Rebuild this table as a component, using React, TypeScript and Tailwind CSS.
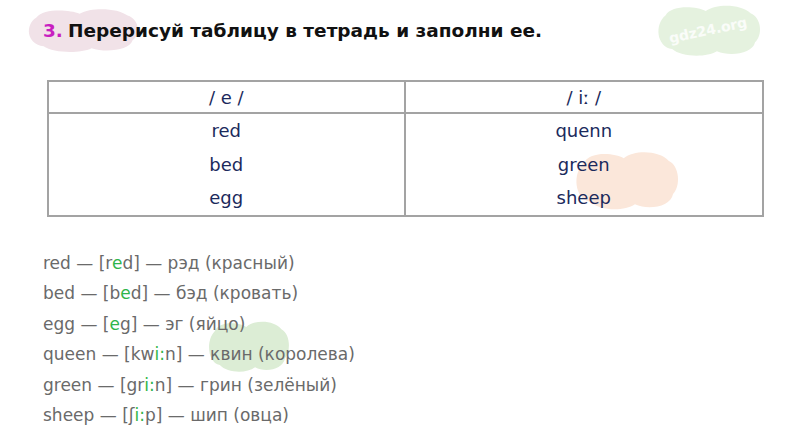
import React from "react";

const G = ({ children }: { children: React.ReactNode }) => (
  <span className="text-[#2fb54a]">{children}</span>
);

function Blob({
  cls,
  color,
  label,
}: {
  cls: string;
  color: string;
  label?: boolean;
}) {
  return (
    <div className={`pointer-events-none absolute ${cls}`}>
      <svg viewBox="0 0 100 50" preserveAspectRatio="none" className="h-full w-full">
        <path
          d="M12 12 C18 2 40 4 48 8 C58 1 80 2 88 10 C98 14 99 30 92 36 C90 46 70 49 58 44 C48 50 26 49 18 42 C4 40 2 20 12 12 Z"
          fill={color}
        />
      </svg>
      {label && (
        <div
          className="absolute inset-0 flex -rotate-12 items-center justify-center text-[14px] font-bold text-white/80"
          style={{ fontFamily: '"DejaVu Sans", sans-serif' }}
        >
          gdz24.org
        </div>
      )}
    </div>
  );
}

export default function App() {
  const rows = [
    ["red", "quenn"],
    ["bed", "green"],
    ["egg", "sheep"],
  ];
  return (
    <div
      className="relative h-[443px] w-[800px] overflow-hidden bg-white"
      style={{ fontFamily: '"DejaVu Sans", "Noto Sans", sans-serif' }}
    >
      <Blob cls="left-[22px] top-[6px] h-[48px] w-[120px]" color="#f1e2e8" />
      <Blob cls="left-[652px] top-[2px] h-[56px] w-[112px]" color="#e5f2df" label />
      <Blob cls="left-[570px] top-[148px] h-[64px] w-[112px]" color="#fbe7da" />
      <Blob cls="left-[204px] top-[318px] h-[56px] w-[88px]" color="#dcedd5" />

      <div className="relative flex flex-col px-[43px] pt-[18px]">
        <div className="flex items-baseline text-[18.5px] font-bold leading-[26px] text-[#111]">
          <span className="mr-[5px] text-[#c81fc0]">3.</span>
          <span>Перерисуй таблицу в тетрадь и заполни ее.</span>
        </div>

        <div className="ml-[4px] mt-[36px] w-[717px] border-2 border-[#a3a3a3] text-[18px] text-[#1b2a5c]">
          <div className="grid h-[32px] grid-cols-2 border-b-2 border-[#a3a3a3]">
            <div className="flex items-center justify-center border-r-2 border-[#a3a3a3]">/ e /</div>
            <div className="flex items-center justify-center">/ iː /</div>
          </div>
          <div className="grid grid-cols-2">
            <div className="flex flex-col items-center border-r-2 border-[#a3a3a3]">
              {rows.map((r) => (
                <div key={r[0]} className="flex h-[33.5px] items-center">{r[0]}</div>
              ))}
            </div>
            <div className="flex flex-col items-center">
              {rows.map((r) => (
                <div key={r[1]} className="flex h-[33.5px] items-center">{r[1]}</div>
              ))}
            </div>
          </div>
        </div>

        <div className="mt-[31px] flex flex-col text-[17px] leading-[30.6px] text-[#6a6a6a]">
          <div>red — [r<G>e</G>d] — рэд (красный)</div>
          <div>bed — [b<G>e</G>d] — бэд (кровать)</div>
          <div>egg — [<G>e</G>g] — эг (яйцо)</div>
          <div>queen — [kw<G>i:</G>n] — квин (королева)</div>
          <div>green — [gr<G>i:</G>n] — грин (зелёный)</div>
          <div>sheep — [ʃ<G>i:</G>p] — шип (овца)</div>
        </div>
      </div>
    </div>
  );
}
